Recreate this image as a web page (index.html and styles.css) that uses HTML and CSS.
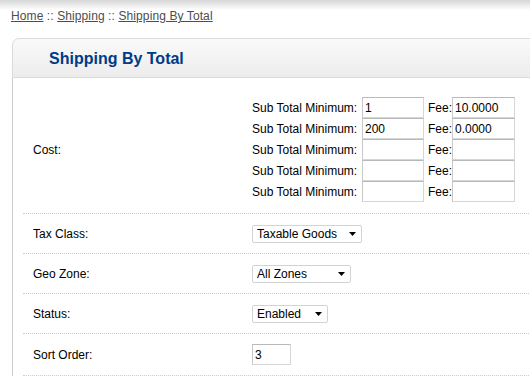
FILE: index.html
```html
<!DOCTYPE html>
<html>
<head>
<meta charset="utf-8">
<title>Shipping By Total</title>
<link rel="stylesheet" href="styles.css">
</head>
<body>
<div class="page">
  <div class="breadcrumb">
    <a href="#">Home</a> :: <a href="#">Shipping</a> :: <a href="#">Shipping By Total</a>
  </div>
  <div class="box">
    <div class="heading"><h1>Shipping By Total</h1></div>
    <div class="content">
      <div class="form">
        <div class="row row-cost">
          <div class="label">Cost:</div>
          <div class="field cost-lines">
            <div class="line"><span class="lbl">Sub Total Minimum:</span><span class="input w62">1</span><span class="lbl fee">Fee:</span><span class="input w63">10.0000</span></div>
            <div class="line"><span class="lbl">Sub Total Minimum:</span><span class="input w62">200</span><span class="lbl fee">Fee:</span><span class="input w63">0.0000</span></div>
            <div class="line"><span class="lbl">Sub Total Minimum:</span><span class="input w62"></span><span class="lbl fee">Fee:</span><span class="input w63"></span></div>
            <div class="line"><span class="lbl">Sub Total Minimum:</span><span class="input w62"></span><span class="lbl fee">Fee:</span><span class="input w63"></span></div>
            <div class="line"><span class="lbl">Sub Total Minimum:</span><span class="input w62"></span><span class="lbl fee">Fee:</span><span class="input w63"></span></div>
          </div>
        </div>
        <div class="row">
          <div class="label">Tax Class:</div>
          <div class="field"><div class="select w110"><span>Taxable Goods</span><svg class="arrow" width="7" height="4" viewBox="0 0 7 4"><path d="M0 0H7L3.5 4Z"/></svg></div></div>
        </div>
        <div class="row">
          <div class="label">Geo Zone:</div>
          <div class="field"><div class="select w99"><span>All Zones</span><svg class="arrow" width="7" height="4" viewBox="0 0 7 4"><path d="M0 0H7L3.5 4Z"/></svg></div></div>
        </div>
        <div class="row">
          <div class="label">Status:</div>
          <div class="field"><div class="select w76"><span>Enabled</span><svg class="arrow" width="7" height="4" viewBox="0 0 7 4"><path d="M0 0H7L3.5 4Z"/></svg></div></div>
        </div>
        <div class="row row-sort">
          <div class="label">Sort Order:</div>
          <div class="field"><span class="input w39">3</span></div>
        </div>
      </div>
    </div>
  </div>
</div>
</body>
</html>
```
FILE: styles.css
```css
html, body {
  margin: 0;
  padding: 0;
}
body {
  background: #fff linear-gradient(#d6d6d6 0px, #ffffff 10px) no-repeat;
  font-family: "Liberation Sans", Arial, sans-serif;
  font-size: 12px;
  color: #000;
  overflow: hidden;
  width: 530px;
  height: 380px;
}
.page {
  width: 660px;
  padding: 9px 0 0 11px;
}
.breadcrumb {
  line-height: 14px;
  color: #4d4d4d;
  height: 14px;
  margin-bottom: 15px;
  letter-spacing: 0.1px;
}
.breadcrumb a {
  color: #4d4d4d;
  text-decoration: underline;
}
.box {
  margin-left: 1px;
}
.heading {
  height: 38px;
  border: 1px solid #dbdbdb;
  border-radius: 7px 7px 0 0;
  background: linear-gradient(#fafafa, #ececec);
  padding-left: 36px;
}
.heading h1 {
  margin: 0;
  padding-top: 11px;
  font-size: 16px;
  font-weight: bold;
  color: #003a88;
  line-height: 18px;
}
.content {
  border-left: 1px solid #cccccc;
  padding: 10px 0 0 10px;
}
.row {
  display: flex;
  align-items: center;
  border-bottom: 1px dotted #cccccc;
  padding: 10px;
  min-height: 19px;
}
.row-cost {
  padding-top: 9px;
  padding-bottom: 11px;
}
.label {
  width: 199px;
  padding-right: 20px;
  flex: none;
}
.cost-lines {
  display: flex;
  flex-direction: column;
}
.line {
  display: flex;
  align-items: center;
  height: 21px;
}
.lbl {
  width: 110px;
  flex: none;
}
.lbl.fee {
  width: 24px;
  padding-left: 4px;
}
.input {
  box-sizing: border-box;
  height: 21px;
  border: 1px solid #d6d6d6;
  border-top-color: #b9b9b9;
  border-left-color: #c8c8c8;
  padding: 0 2px;
  display: flex;
  align-items: center;
  background: #fff;
  flex: none;
}
.w62 { width: 62px; }
.w63 { width: 63px; }
.w39 { width: 39px; }
.select {
  box-sizing: border-box;
  height: 18px;
  border: 1px solid #d3d3d3;
  border-radius: 2px;
  padding: 0 5px 0 4px;
  display: flex;
  align-items: center;
  justify-content: space-between;
  background: #fff;
}
.w110 { width: 110px; }
.w99 { width: 99px; }
.w76 { width: 76px; }
.arrow {
  fill: #000;
  flex: none;
}
```
